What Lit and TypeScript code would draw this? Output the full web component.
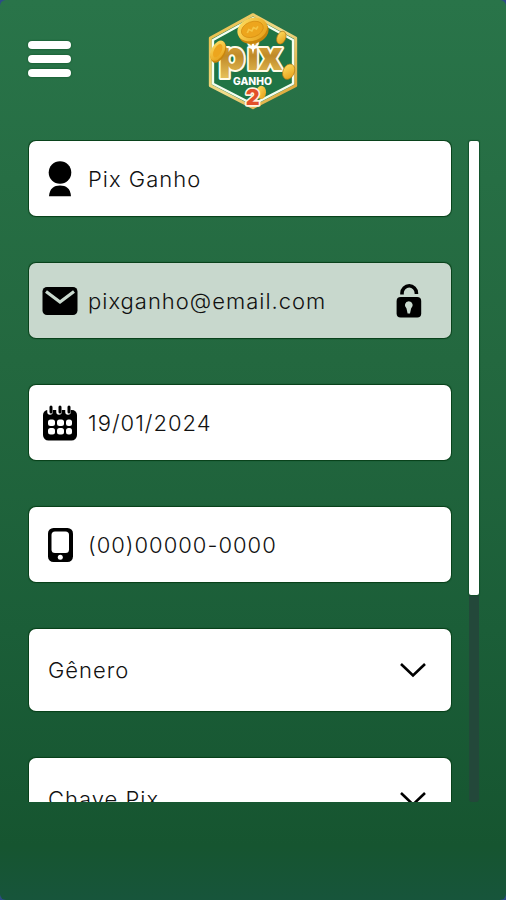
import { LitElement, html, css, svg, type TemplateResult } from "lit";
import { customElement } from "lit/decorators.js";

const userIcon = svg`<svg viewBox="0 0 36 36" aria-hidden="true">
  <circle cx="18" cy="11.500" r="11.300"/>
  <path d="M7 35.200C7.600 27.500 12 24.600 18 24.600S28.500 27.500 29 35.200Z"/></svg>`;

const mailIcon = svg`<svg viewBox="0 0 36 36" aria-hidden="true">
  <rect x=".5" y="4" width="35" height="28" rx="4.500"/>
  <path d="M4 8.500l14 10.500L32 8.500" fill="none" stroke="#c9d9ce" stroke-width="3.200"/></svg>`;

const calendarIcon = svg`<svg viewBox="0 0 36 36" aria-hidden="true">
  <path d="M1 10a5 5 0 0 1 5-5h24a5 5 0 0 1 5 5v20a5.500 5.500 0 0 1-5.500 5.500h-23A5.500 5.500 0 0 1 1 30Z"/>
  <g stroke-linecap="round">
    <path d="M8 3v4M17 3v4M26 3v4" stroke="#fff" stroke-width="5.500"/>
    <path d="M9 2v5M18 2v5M27 2v5" stroke="#000" stroke-width="3"/>
  </g>
  <g fill="#fff">
    <rect x="6" y="14.500" width="7" height="6.500" rx="2.500"/><rect x="15" y="14.500" width="7" height="6.500" rx="2.500"/><rect x="24" y="14.500" width="6" height="6.500" rx="2.500"/>
    <rect x="6" y="23" width="7" height="6.500" rx="2.500"/><rect x="15" y="23" width="7" height="6.500" rx="2.500"/><rect x="24" y="23" width="6" height="6.500" rx="2.500"/>
  </g></svg>`;

const phoneIcon = svg`<svg viewBox="0 0 36 36" aria-hidden="true">
  <rect x="6" y="1" width="25" height="34" rx="5.500"/>
  <rect x="9.500" y="4.500" width="17.500" height="21.500" rx="3.500" fill="#fff"/>
  <circle cx="18.300" cy="30.300" r="2.500" fill="#fff"/></svg>`;

const lockIcon = svg`<svg viewBox="0 0 26 36" aria-hidden="true">
  <path d="M6 11.500V10a7.200 7.200 0 0 1 14.400 0v1" fill="none" stroke="#000" stroke-width="3.600"/>
  <rect x=".6" y="14" width="24.600" height="20.500" rx="4"/>
  <path d="M12.800 18.200a4 4 0 0 1 2.300 7.200L14 30.500h-2.400l-1.100-5.100a4 4 0 0 1 2.300-7.200Z" fill="#c9d9ce"/></svg>`;

const chevron = svg`<svg class="chevron" viewBox="0 0 28 16" aria-hidden="true">
  <path d="M2 2l12 11.500L26 2" fill="none" stroke="#000" stroke-width="2.600"/></svg>`;

const logo = svg`<svg class="logo" viewBox="28 23 270 294" role="img" aria-label="Pix Ganho 2">
  <defs>
    <linearGradient id="gold" x1="0" y1="0" x2="0" y2="1">
      <stop offset="0" stop-color="#f2c04a"/><stop offset=".5" stop-color="#c08a28"/><stop offset="1" stop-color="#eac65e"/>
    </linearGradient>
    <linearGradient id="rim" x1="0" y1="0" x2="1" y2="1">
      <stop offset="0" stop-color="#e9b83c"/><stop offset=".5" stop-color="#f0dc8c"/><stop offset="1" stop-color="#d99a24"/>
    </linearGradient>
    <linearGradient id="coin" x1="0" y1="0" x2="1" y2="1">
      <stop offset="0" stop-color="#ffe266"/><stop offset="1" stop-color="#e59a12"/>
    </linearGradient>
  </defs>
  <path d="M163 31L291 101V244L163 310L35 244V101Z" fill="#1f7545" stroke="url(#rim)" stroke-width="9" stroke-linejoin="round"/>
  <path d="M163 41L283 107V238L163 300L43 238V107Z" fill="none" stroke="#f4fff0" stroke-width="7" stroke-linejoin="round"/>
  <ellipse cx="248" cy="100" rx="13" ry="20" transform="rotate(22 248 100)" fill="url(#coin)" stroke="#b77a12" stroke-width="2"/>
  <ellipse cx="188" cy="264" rx="14" ry="20" fill="url(#coin)"/>
  <g class="word" fill="url(#gold)">
    <text x="60" y="198">p</text><text x="145" y="198">i</text><text x="178" y="198">x</text>
  </g>
  <path d="M163 108l4 16 14 5-14 5-4 16-4-16-14-5 14-5Z" fill="#fff"/>
  <text class="sub" x="103" y="242">GANHO</text>
  <text class="two" x="141" y="302">2</text>
  <g transform="rotate(-20 162 78)">
    <ellipse cx="163" cy="84" rx="46" ry="34" fill="#c9860c"/>
    <ellipse cx="162" cy="75" rx="46" ry="34" fill="url(#coin)"/>
    <ellipse cx="162" cy="75" rx="34" ry="23" fill="#eda51d" stroke="#d48a10" stroke-width="2"/>
    <path d="M144 80l8-8 7 7 8-8 7 7 7-6" fill="none" stroke="#f6c545" stroke-width="5"/>
  </g>
  <g transform="rotate(28 59 140)">
    <ellipse cx="61" cy="143" rx="20" ry="34" fill="#c9860c"/>
    <ellipse cx="57" cy="140" rx="19" ry="33" fill="url(#coin)"/>
    <ellipse cx="57" cy="140" rx="11" ry="22" fill="#eda51d"/>
  </g>
  <ellipse cx="270" cy="202" rx="17" ry="24" transform="rotate(25 270 202)" fill="url(#coin)" stroke="#b77a12" stroke-width="2"/>
</svg>`;

interface Field {
  label: string;
  value: string;
  type: string;
  icon: TemplateResult;
  locked?: boolean;
}

const fields: Field[] = [
  { label: "Nome", value: "Pix Ganho", type: "text", icon: userIcon },
  { label: "E-mail", value: "pixganho@email.com", type: "email", icon: mailIcon, locked: true },
  { label: "Data de nascimento", value: "19/01/2024", type: "text", icon: calendarIcon },
  { label: "Telefone", value: "(00)00000-0000", type: "tel", icon: phoneIcon },
];

const choices = ["Gênero", "Chave Pix"];

@customElement("app-root")
export class AppRoot extends LitElement {
  static styles = css`
    :host {
      display: block;
      background: #2c4c86;
      font-family: Inter, "Liberation Sans", sans-serif;
      color: #111;
    }
    * {
      box-sizing: border-box;
    }
    .screen {
      display: flex;
      flex-direction: column;
      height: 100vh;
      border-radius: 6px;
      background: linear-gradient(#297449, #23683f 40%, #1b5e38 70%, #165530 94%, #17553b);
    }
    .header {
      display: grid;
      grid-template-columns: 1fr auto 1fr;
      align-items: center;
      padding: 12px 28px 30px;
    }
    .menu {
      display: flex;
      flex-direction: column;
      justify-self: start;
      gap: 6px;
      width: 43px;
      padding: 0 0 4px;
      border: 0;
      background: none;
      cursor: pointer;
    }
    .bar {
      height: 8px;
      border-radius: 4px;
      background: #fff;
      box-shadow: 0 0 2px #06491b;
    }
    .logo {
      display: block;
      width: 90px;
      height: 98px;
    }
    .word {
      font-size: 122px;
      font-weight: 900;
      stroke: #fffbe6;
      stroke-width: 12px;
      stroke-linejoin: round;
      paint-order: stroke;
    }
    .sub {
      font-size: 31px;
      font-weight: 800;
      fill: #fff;
    }
    .two {
      font-size: 64px;
      font-weight: 900;
      fill: #e2502a;
      stroke: #fff3e0;
      stroke-width: 10px;
      stroke-linejoin: round;
      paint-order: stroke;
    }
    .body {
      display: flex;
      flex: 1;
      gap: 17px;
      min-height: 0;
      padding: 0 27px 98px 28px;
    }
    .list {
      display: flex;
      flex: 1;
      flex-direction: column;
      gap: 47px;
      min-width: 0;
      padding: 1px;
      overflow-y: auto;
      scrollbar-width: none;
    }
    .field {
      display: flex;
      flex: none;
      align-items: center;
      gap: 10px;
      height: 75px;
      padding: 0 29px 0 13px;
      border-radius: 7px;
      background: #fff;
      box-shadow: 0 0 1px 1px #073f18;
    }
    .field svg {
      flex: none;
      height: 36px;
    }
    .locked {
      background: #c8d8cd;
    }
    .input {
      flex: 1;
      min-width: 0;
      padding: 0;
      border: 0;
      outline: 0;
      background: none;
      color: inherit;
      font: 300 22px/32px Inter, "Liberation Sans", sans-serif;
      letter-spacing: 1px;
    }
    .choice {
      height: 82px;
      padding: 0 24px 0 19px;
    }
    .select {
      appearance: none;
      height: 82px;
      cursor: pointer;
    }
    .field .chevron {
      width: 28px;
      height: 16px;
      pointer-events: none;
    }
    .track {
      display: flex;
      flex-direction: column;
      width: 10px;
      margin-top: 1px;
      border-radius: 3px;
      background: #23483a;
    }
    .thumb {
      flex: 11;
      border-radius: 2px;
      background: #fff;
      box-shadow: 0 0 1px 1px #12502b;
    }
    .rest {
      flex: 5;
    }
  `;

  render() {
    return html`
      <main class="screen">
        <header class="header">
          <button class="menu" aria-label="Menu">
            <span class="bar"></span><span class="bar"></span><span class="bar"></span>
          </button>
          ${logo}
        </header>
        <div class="body">
          <form class="list">
            ${fields.map(
              (f) => html`<label class="field ${f.locked ? "locked" : ""}">
                ${f.icon}
                <input class="input" type=${f.type} aria-label=${f.label} .value=${f.value} ?readonly=${f.locked} />
                ${f.locked ? lockIcon : ""}
              </label>`
            )}
            ${choices.map(
              (c) => html`<label class="field choice">
                <select class="input select" aria-label=${c}>
                  <option>${c}</option>
                </select>
                ${chevron}
              </label>`
            )}
          </form>
          <div class="track" aria-hidden="true">
            <div class="thumb"></div>
            <div class="rest"></div>
          </div>
        </div>
      </main>
    `;
  }
}
